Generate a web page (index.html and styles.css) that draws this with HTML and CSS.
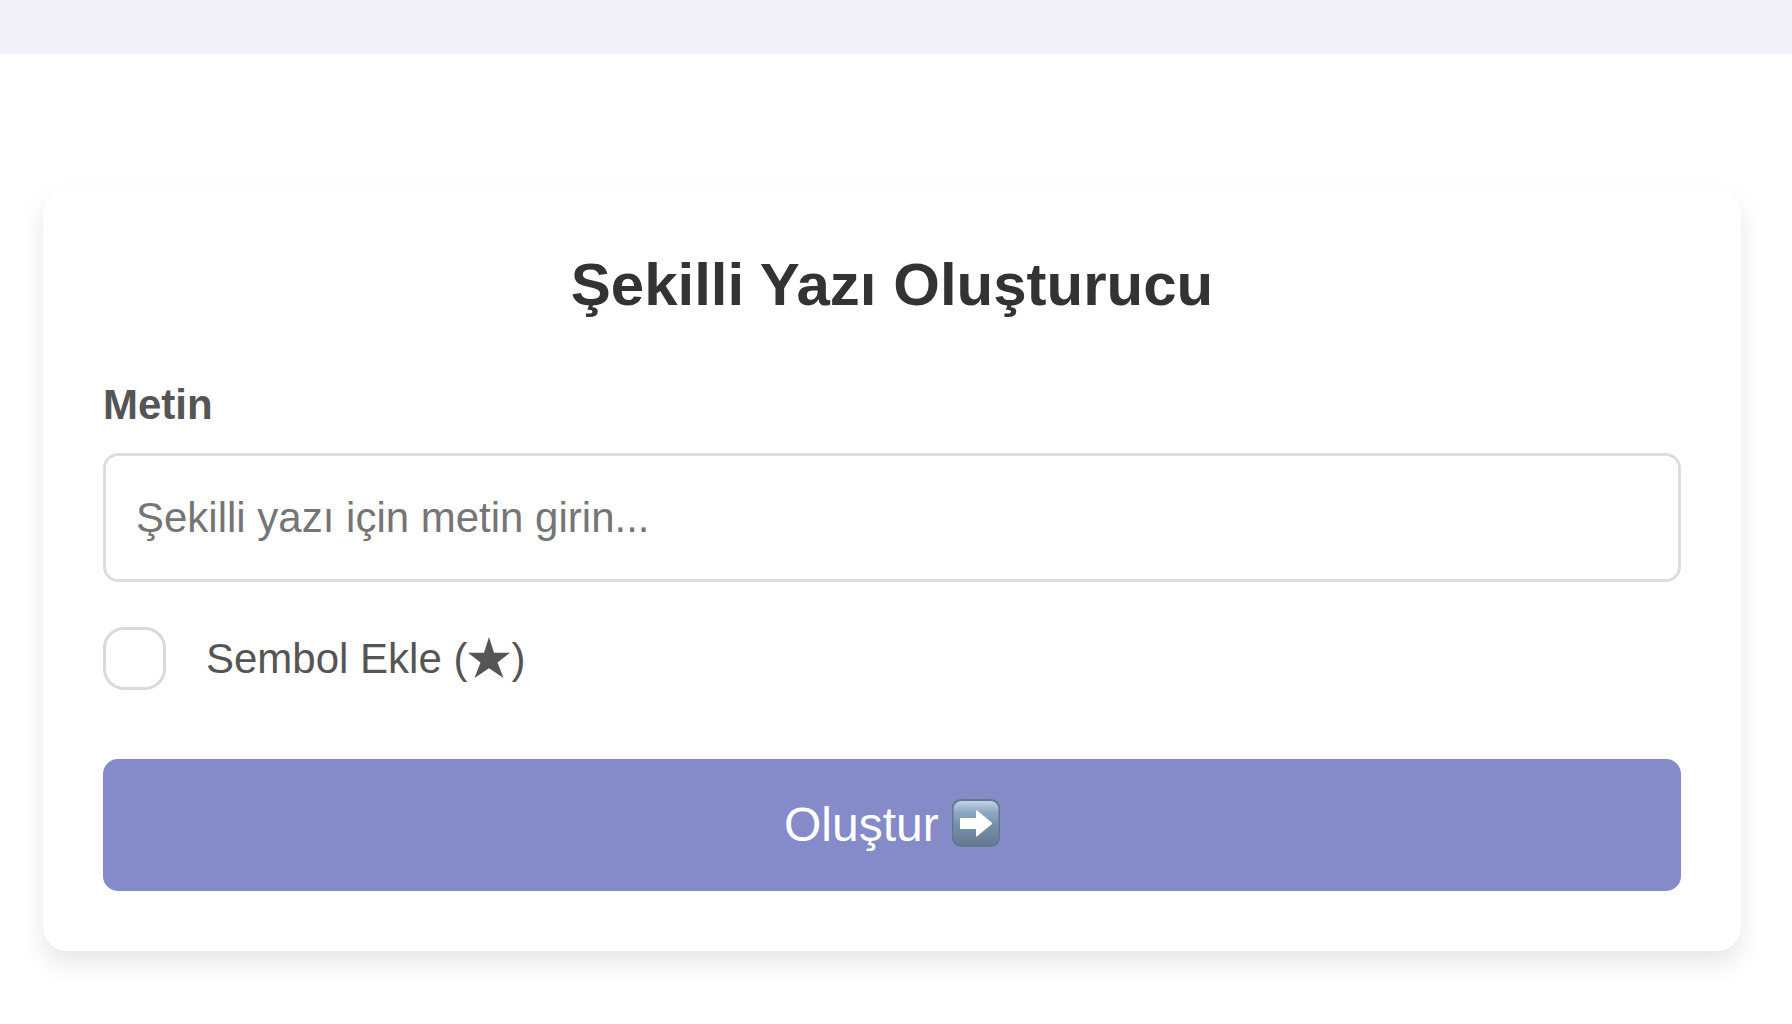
FILE: index.html
```html
<!DOCTYPE html>
<html lang="tr">
<head>
<meta charset="utf-8">
<meta name="viewport" content="width=device-width, initial-scale=1">
<title>Şekilli Yazı Oluşturucu</title>
<link rel="stylesheet" href="styles.css">
</head>
<body>
<header class="top-bar"></header>
<main class="page">
  <form class="card">
    <h1 class="title">Şekilli Yazı Oluşturucu</h1>
    <label class="field-label" for="metin">Metin</label>
    <input class="text-input" id="metin" type="text" placeholder="Şekilli yazı için metin girin...">
    <div class="check-row">
      <input class="checkbox" id="sembol" type="checkbox">
      <label class="check-label" for="sembol">Sembol Ekle (<svg class="star" viewBox="0 0 44 42" role="img" aria-label="★"><path d="M22 0L27 15.7H43L30.5 25.5L36.5 41L22 31.3L7.5 41L13.5 25.5L1 15.7H17Z"/></svg>)</label>
    </div>
    <button class="submit" type="button">Oluştur <svg class="arrow" viewBox="0 0 48 48" aria-hidden="true">
        <defs>
          <linearGradient id="tile" x1="0" y1="0" x2="0" y2="1"><stop offset="0" stop-color="#c3d3e1"/><stop offset=".25" stop-color="#8da8c2"/><stop offset=".55" stop-color="#7690aa"/><stop offset="1" stop-color="#65798f"/></linearGradient>
        </defs>
        <rect width="48" height="48" rx="9" fill="#5f7790"/>
        <rect x="1.5" y="2" width="45" height="44.5" rx="8" fill="url(#tile)"/>
        <path d="M8.5 19H24V12Q24 10.5 25.2 11.6L39.6 23.4Q40.6 24.3 39.6 25.2L25.2 37.2Q24 38.2 24 36.8V30H8.5Q8 30 8 29.3V19.7Q8 19 8.5 19Z" fill="#fff"/>
      </svg></button>
  </form>
</main>
</body>
</html>
```
FILE: styles.css
```css
* { box-sizing: border-box; }
body { margin: 0; background: #fff; font-family: "Liberation Sans", Arial, sans-serif; color: #555; }
.top-bar { height: 54px; background: #f2f1f7; }
.page { padding: 135px 51px 72px 43px; }
.card { display: flex; flex-direction: column; padding: 60px; border-radius: 24px; background: #fff; box-shadow: 0 12px 24px rgba(0, 0, 0, .1); }
.title { margin: 0 0 60px; color: #333; font-size: 60px; line-height: 72px; text-align: center; }
.field-label { margin-bottom: 24px; font-size: 42px; line-height: 48px; font-weight: bold; }
.text-input { width: 100%; height: 129px; padding: 0 30px; border: 3px solid #ddd; border-radius: 15px; background: #fff; color: #333; font: 42px/48px "Liberation Sans", Arial, sans-serif; }
.text-input::placeholder { color: #757575; opacity: 1; }
.check-row { display: flex; align-items: center; gap: 40px; margin: 45px 0 69px; }
.checkbox { appearance: none; width: 63px; height: 63px; margin: 0; border: 3px solid #d9d9d9; border-radius: 21px; background: #fff; }
.checkbox:checked { background: #858ac8; }
.check-label { font-size: 42px; line-height: 48px; }
.star { width: 44px; height: 42px; vertical-align: -6px; fill: currentColor; }
.submit { height: 132px; border: 0; border-radius: 15px; background: #858ac8; color: #fff; font: 48px/56px "Liberation Sans", Arial, sans-serif; text-align: center; }
.arrow { width: 48px; height: 48px; vertical-align: -6px; }
```
